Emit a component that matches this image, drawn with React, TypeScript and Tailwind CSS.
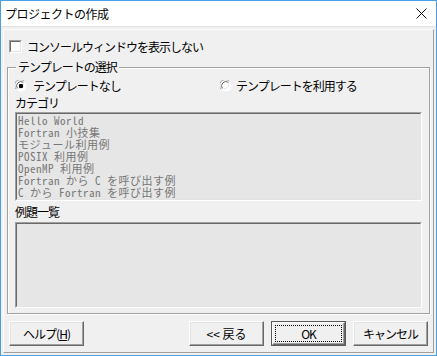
import React from 'react';

const ui = "font-['Noto_Sans_CJK_JP','Noto_Sans',sans-serif]";

function CheckBox() {
  return (
    <div className="h-[13px] w-[13px] shrink-0 border border-t-[#a0a0a0] border-l-[#a0a0a0] border-r-white border-b-white">
      <div className="h-full w-full border border-t-[#696969] border-l-[#696969] border-r-[#e3e3e3] border-b-[#e3e3e3] bg-white" />
    </div>
  );
}

function Radio({ checked }: { checked?: boolean }) {
  return (
    <svg width="12" height="12" viewBox="0 0 12 12" className="shrink-0">
      <circle cx="6" cy="6" r="5.5" fill="white" />
      <path d="M1.2 9.2 A5.5 5.5 0 0 1 9.2 1.2" fill="none" stroke="#a0a0a0" strokeWidth="1" />
      <path d="M2.4 8.4 A4.3 4.3 0 0 1 8.4 2.4" fill="none" stroke="#696969" strokeWidth="1" />
      <path d="M9.6 2.8 A5.5 5.5 0 0 1 2.8 9.6" fill="none" stroke="#ffffff" strokeWidth="1" />
      <path d="M8.6 3.6 A4.3 4.3 0 0 1 3.6 8.6" fill="none" stroke="#e3e3e3" strokeWidth="1" />
      {checked ? <rect x="4" y="4" width="4" height="4" rx="1" fill="black" /> : null}
    </svg>
  );
}

function ListBox({ items, height }: { items: string[]; height: string }) {
  return (
    <div className={`w-[407px] ${height} border border-t-[#a0a0a0] border-l-[#a0a0a0] border-r-white border-b-white`}>
      <div className="h-full w-full border border-t-[#696969] border-l-[#696969] border-r-[#e3e3e3] border-b-[#e3e3e3] bg-[#e6e6e6] pl-[1px] font-['Noto_Sans_Mono_CJK_JP','Liberation_Mono',monospace] text-[11px] leading-[12px] tracking-[0.5px] text-[#777777]">
        {items.map((item) => (
          <div key={item} className="h-[12px] whitespace-pre">
            {item}
          </div>
        ))}
      </div>
    </div>
  );
}

function Button({ children, isDefault }: { children: React.ReactNode; isDefault?: boolean }) {
  if (isDefault) {
    return (
      <div className="h-[25px] w-[75px] border border-[#5a5a5a]">
        <div className="h-full w-full border border-t-white border-l-white border-r-[#696969] border-b-[#696969] bg-[#f0f0f0] p-[2px] shadow-[inset_-1px_-1px_0_#a0a0a0]">
          <div className="flex h-full w-full items-center justify-center border border-dotted border-black text-[12px] leading-[12px] tracking-[-1px] text-black">
            {children}
          </div>
        </div>
      </div>
    );
  }
  return (
    <div className="flex h-[25px] w-[75px] items-center justify-center border border-t-white border-l-white border-r-[#696969] border-b-[#696969] bg-[#f0f0f0] text-[12px] leading-[12px] tracking-[-1px] text-black shadow-[inset_-1px_-1px_0_#a0a0a0,inset_1px_1px_0_#e3e3e3]">
      {children}
    </div>
  );
}

export default function App() {
  const categories = [
    'Hello World',
    'Fortran 小技集',
    'モジュール利用例',
    'POSIX 利用例',
    'OpenMP 利用例',
    'Fortran から C を呼び出す例',
    'C から Fortran を呼び出す例',
  ];

  return (
    <div className={`flex h-[356px] w-[437px] flex-col border border-[#4b9ee0] bg-[#f0f0f0] ${ui} text-black`}>
      <div className="flex h-[25px] shrink-0 items-center justify-between bg-white pl-[4px] pr-[9px]">
        <span className="text-[12px] leading-[12px] tracking-[-0.5px]">プロジェクトの作成</span>
        <svg width="11" height="11" viewBox="0 0 11 11">
          <path d="M0.5 0.5 L10.5 10.5 M10.5 0.5 L0.5 10.5" stroke="#111" strokeWidth="1" />
        </svg>
      </div>
      <div className="flex-1 border-t border-[#e3e3e3] pb-[2px] pl-[2px] pr-[2px] pt-[2px]">
        <div className="flex h-full flex-col border border-t-[#fbfbfb] border-l-[#fbfbfb] border-r-[#a0a0a0] border-b-[#a0a0a0]">
          <div className="ml-[5px] mt-[10px] flex items-center gap-[5px]">
            <CheckBox />
            <span className="text-[12px] leading-[13px] tracking-[-1px]">コンソールウィンドウを表示しない</span>
          </div>

          <div className="relative ml-[3px] mt-[14px] h-[247px] w-[423px] border border-[#a0a0a0] shadow-[inset_1px_1px_0_#fff,1px_1px_0_#fff]">
            <span className="absolute left-[8px] top-[-7px] bg-[#f0f0f0] px-[2px] text-[12px] leading-[12px] tracking-[-1px]">
              テンプレートの選択
            </span>
            <div className="flex flex-col pl-[7px] pt-[12px]">
              <div className="flex h-[12px] items-center">
                <div className="flex w-[205px] items-center gap-[6px]">
                  <Radio checked />
                  <span className="text-[12px] leading-[12px] tracking-[-1px]">テンプレートなし</span>
                </div>
                <div className="flex items-center gap-[4px]">
                  <Radio />
                  <span className="text-[12px] leading-[12px] tracking-[-1px]">テンプレートを利用する</span>
                </div>
              </div>
              <span className="mt-[5px] h-[12px] text-[12px] leading-[12px] tracking-[-1px]">カテゴリ</span>
              <div className="mt-[3px]">
                <ListBox items={categories} height="h-[89px]" />
              </div>
              <span className="mt-[5px] h-[12px] text-[12px] leading-[12px] tracking-[-1px]">例題一覧</span>
              <div className="mt-[4px]">
                <ListBox items={[]} height="h-[86px]" />
              </div>
            </div>
          </div>

          <div className="ml-[5px] mt-[7px] flex items-center">
            <Button>
              ヘルプ(<span className="underline">H</span>)
            </Button>
            <div className="ml-[105px] flex gap-[7px]">
              <Button>
                <span className="tracking-normal">&lt;&lt; 戻る</span>
              </Button>
              <Button isDefault>OK</Button>
              <Button>キャンセル</Button>
            </div>
          </div>
        </div>
      </div>
    </div>
  );
}
